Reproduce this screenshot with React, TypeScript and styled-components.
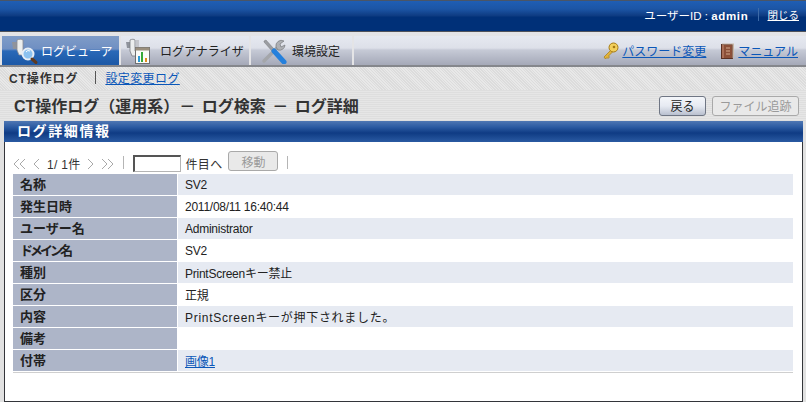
import React, { ReactElement } from 'react';
import styled, { createGlobalStyle } from 'styled-components';

const FONT = `"Liberation Sans", "Noto Sans CJK JP", sans-serif`;
const TAB_BG = 'linear-gradient(#e6e9f0 0, #dde0e9 12px, #c6cad6 14px, #b4b8c6 22px, #a5a9b8 29px)';

const ROWS: { label: string; value: string; link?: boolean; narrow?: boolean; wide?: boolean }[] = [
  { label: '名称', value: 'SV2' },
  { label: '発生日時', value: '2011/08/11 16:40:44' },
  { label: 'ユーザー名', value: 'Administrator' },
  { label: 'ドメイン名', value: 'SV2', narrow: true },
  { label: '種別', value: 'PrintScreenキー禁止' },
  { label: '区分', value: '正規' },
  { label: '内容', value: 'PrintScreenキーが押下されました。', wide: true },
  { label: '備考', value: '' },
  { label: '付帯', value: '画像1', link: true },
];

function ViewerIcon(): ReactElement {
  return (
    <svg width="36" height="28" viewBox="0 0 36 28">
      <path d="M7 5h5v7H8z" fill="#8f939c" />
      <path d="M12 3c2-1 5-1 6 0v11l5 1v3H14l-2-5z" fill="#eceeee" stroke="#8a8c92" strokeWidth="0.8" />
      <circle cx="23" cy="17" r="5.500" fill="#8cc2f0" stroke="#e6edf6" strokeWidth="2" />
      <path d="M21 15a3 3 0 0 1 4-1" stroke="#fff" fill="none" />
      <path d="M27 22l4 3.500" stroke="#5e3a20" strokeWidth="3" strokeLinecap="round" />
    </svg>
  );
}

function AnalyzerIcon(): ReactElement {
  return (
    <svg width="36" height="28" viewBox="0 0 36 28">
      <path d="M2 5h4v6H3z" fill="#8f939c" />
      <path d="M6 3c2-1 4-1 5 0v11l5 1v4H8l-2-5z" fill="#eceeee" stroke="#7a7b80" strokeWidth="0.8" />
      <path d="M12 3h3v8h-3z" fill="#c4c6cb" />
      <rect x="11.500" y="10.500" width="14" height="16" fill="#fbfbf7" stroke="#6f6f70" />
      <rect x="11.500" y="10.500" width="14" height="3" fill="#9a8f7e" />
      <rect x="14" y="19" width="2" height="6" fill="#2d9ad6" />
      <rect x="17" y="15" width="2" height="10" fill="#37a838" />
      <rect x="21" y="21" width="2" height="4" fill="#e28a1c" />
    </svg>
  );
}

function ToolsIcon(): ReactElement {
  return (
    <svg width="26" height="26" viewBox="0 0 26 26">
      <path d="M3 23L17 9" stroke="#a4a6aa" strokeWidth="3.500" strokeLinecap="round" />
      <path d="M15 9a5.500 5.500 0 0 1 8-6l-4 3 1 3 4-2a5.500 5.500 0 0 1-7 5z" fill="#aeb0b4" stroke="#77787c" strokeWidth="0.7" />
      <path d="M3 3l2-1 8 9-2 2-8-9z" fill="#9b9da2" stroke="#77787c" strokeWidth="0.5" />
      <path d="M13 13l10 11" stroke="#2580dc" strokeWidth="5" strokeLinecap="round" />
    </svg>
  );
}

function KeyIcon(): ReactElement {
  return (
    <svg width="17" height="18" viewBox="0 0 17 18">
      <path d="M9 8L2 15l1.500 2 1.500-1.500 1 1 1.500-1.500-1-1 4-4z" fill="#e3b43a" stroke="#a57a14" strokeWidth="0.7" />
      <circle cx="11.500" cy="5.500" r="4.500" fill="#f2cf5c" stroke="#a57a14" />
      <circle cx="12" cy="5" r="1.300" fill="#a57a14" />
    </svg>
  );
}

function BookIcon(): ReactElement {
  return (
    <svg width="14" height="16" viewBox="0 0 14 16">
      <rect x="0.500" y="1.500" width="11" height="14" fill="#8b4f38" stroke="#5a3022" />
      <path d="M1 0.500h12v13l-1.500 2V1.500H1z" fill="#c9b8a8" />
      <path d="M2 2v13" stroke="#c98f74" />
      <path d="M5 5h4M5 8h4M5 11h4" stroke="#d4aa8c" />
    </svg>
  );
}

function App(): ReactElement {
  return (
    <Page>
      <GlobalStyle />
      <Banner>
        <UserId>ユーザーID : <b>admin</b></UserId>
        <BannerSep />
        <CloseLink>閉じる</CloseLink>
      </Banner>
      <TabBar>
        <Tab $active $width={117}>
          <ViewerIcon />
          <TabLabel>ログビューア</TabLabel>
        </Tab>
        <Tab $width={128}>
          <AnalyzerIcon />
          <TabLabel>ログアナライザ</TabLabel>
        </Tab>
        <Tab $width={101} $gap={5} $inset={10}>
          <ToolsIcon />
          <TabLabel>環境設定</TabLabel>
        </Tab>
        <TabTools>
          <ToolLink>
            <KeyIcon />
            <BlueLink>パスワード変更</BlueLink>
          </ToolLink>
          <ToolLink>
            <BookIcon />
            <BlueLink>マニュアル</BlueLink>
          </ToolLink>
        </TabTools>
      </TabBar>
      <SubNav>
        <SubCurrent>CT操作ログ</SubCurrent>
        <SubSep />
        <SubLink>設定変更ログ</SubLink>
      </SubNav>
      <TitleRow>
        <Title>CT操作ログ（運用系）－ ログ検索 － ログ詳細</Title>
        <ActionButton>戻る</ActionButton>
        <ActionButton disabled $width={87}>ファイル追跡</ActionButton>
      </TitleRow>
      <Panel>
        <PanelHead>ログ詳細情報</PanelHead>
        <Pager>
          <PagerArrows>
            <svg width="28" height="12" viewBox="0 0 28 12">
              <path d="M6 1L1 6l5 5M12 1L7 6l5 5M26 1l-5 5 5 5" fill="none" stroke="#a9a9a9" />
            </svg>
          </PagerArrows>
          <PagerCount>1/ 1件</PagerCount>
          <PagerArrows>
            <svg width="27" height="12" viewBox="0 0 27 12">
              <path d="M1 1l5 5-5 5M15 1l5 5-5 5M21 1l5 5-5 5" fill="none" stroke="#a9a9a9" />
            </svg>
          </PagerArrows>
          <PagerSep />
          <PageInput />
          <PagerCount $tight>件目へ</PagerCount>
          <MoveButton disabled>移動</MoveButton>
          <PagerSep />
        </Pager>
        <DetailTable>
          <tbody>
            {ROWS.map((row, i) => (
              <tr key={row.label}>
                <LabelCell $narrow={row.narrow}>{row.label}</LabelCell>
                <ValueCell $odd={i % 2 === 0} $wide={row.wide}>
                  {row.link ? <BlueLink>{row.value}</BlueLink> : row.value}
                </ValueCell>
              </tr>
            ))}
          </tbody>
        </DetailTable>
      </Panel>
    </Page>
  );
}

const GlobalStyle = createGlobalStyle`
  html, body {
    margin: 0;
    padding: 0;
    overflow: hidden;
  }
`;

const Page = styled.div`
  width: 806px;
  height: 402px;
  display: flex;
  flex-direction: column;
  font-family: ${FONT};
  font-size: 12px;
  color: #222;
  background: #e1e1e1;
  overflow: hidden;
`;

const Banner = styled.div`
  height: 32px;
  box-sizing: border-box;
  flex: none;
  display: flex;
  align-items: center;
  justify-content: flex-end;
  padding: 0 7px 3px 0;
  color: #fff;
  border-top: 1px solid #4a5566;
  border-bottom: 1px solid #50535a;
  background: linear-gradient(#1f5eb4 0, #1c55a5 8px, #0d3a80 15px, #003078 16px, #003078 100%);
`;

const UserId = styled.span`
  font-size: 11.5px;
  & b {
    letter-spacing: 0.7px;
  }
`;

const BannerSep = styled.span`
  width: 1px;
  height: 13px;
  margin: 0 9px 0 9px;
  background: #3c6aa8;
`;

const CloseLink = styled.a`
  color: #fff;
  font-size: 10.500px;
  text-decoration: underline;
`;

const TabBar = styled.div`
  height: 35px;
  box-sizing: border-box;
  flex: none;
  display: flex;
  padding: 4px 0 0 2px;
  gap: 2px;
  background: #e4e4e6;
  border-bottom: 2px solid #85878c;
`;

const Tab = styled.div<{ $active?: boolean; $width: number; $gap?: number; $inset?: number }>`
  width: ${p => p.$width}px;
  box-sizing: border-box;
  display: flex;
  align-items: center;
  gap: ${p => p.$gap ?? 0}px;
  padding-left: ${p => p.$inset ?? 3}px;
  color: ${p => (p.$active ? '#fff' : '#222')};
  background: ${p =>
    p.$active
      ? 'linear-gradient(#7f9cc8 0, #6f8fc2 13px, #2a69b8 15px, #1d5aa8 27px)'
      : TAB_BG};
`;

const TabLabel = styled.span`
  font-size: 12px;
  white-space: nowrap;
`;

const TabTools = styled.div`
  flex: 1;
  display: flex;
  justify-content: flex-end;
  align-items: center;
  gap: 15px;
  padding-right: 8px;
  background: ${TAB_BG};
`;

const ToolLink = styled.span`
  display: inline-flex;
  align-items: center;
  gap: 3px;
`;

const BlueLink = styled.a`
  color: #0b57b8;
  text-decoration: underline;
  font-size: 12px;
`;

const SubNav = styled.div`
  height: 23px;
  flex: none;
  box-sizing: border-box;
  display: flex;
  align-items: center;
  padding: 0 0 2px 9px;
  background: repeating-linear-gradient(45deg, #dcdcdc 0, #dcdcdc 1px, #e8e8e8 1px, #e8e8e8 2px);
`;

const SubCurrent = styled.span`
  font-weight: bold;
  font-size: 12px;
  letter-spacing: 0.9px;
  color: #333;
`;

const SubSep = styled.span`
  width: 1px;
  height: 13px;
  margin: 0 9px 0 17px;
  background: #555;
`;

const SubLink = styled(BlueLink)`
  letter-spacing: 0.4px;
`;

const TitleRow = styled.div`
  height: 31px;
  flex: none;
  box-sizing: border-box;
  display: flex;
  align-items: center;
  gap: 6px;
  padding: 0 7px 0 14px;
  background: repeating-linear-gradient(0deg, #dedede 0, #dedede 1px, #e6e6e6 1px, #e6e6e6 2px);
`;

const Title = styled.h1`
  flex: 1;
  margin: 0 0 2px;
  font-size: 16px;
  font-weight: bold;
  word-spacing: 2px;
  color: #333;
  white-space: nowrap;
`;

const ActionButton = styled.button<{ $width?: number }>`
  width: ${p => p.$width ?? 47}px;
  height: 20px;
  box-sizing: border-box;
  padding: 0;
  border-radius: 3px;
  font-family: ${FONT};
  font-size: 12px;
  color: #222;
  border: 1px solid #6f7684;
  background: linear-gradient(#f4f6fa, #e6eaf2 50%, #b9c0cf);
  &:disabled {
    color: #9a9a9a;
    border-color: #a9a9a9;
    background: #e9e9e9;
  }
`;

const Panel = styled.section`
  flex: 1;
  min-height: 0;
  margin: 0 3px 0 4px;
  box-sizing: border-box;
  display: flex;
  flex-direction: column;
  background: #fff;
  border-left: 1px solid #33353a;
  border-right: 1px solid #33353a;
  border-bottom: 1px solid #33353a;
`;

const PanelHead = styled.h2`
  height: 21px;
  flex: none;
  margin: 0 -1px;
  box-sizing: border-box;
  padding: 1px 0 0 13px;
  font-size: 14px;
  font-weight: bold;
  letter-spacing: 1.600px;
  line-height: 18px;
  color: #fff;
  background: linear-gradient(#4f77b3 0, #2c5ba2 6px, #0f3b84 12px, #2a5aa2 21px);
`;

const Pager = styled.div`
  height: 32px;
  flex: none;
  display: flex;
  align-items: center;
  padding: 6px 0 0 8px;
  box-sizing: border-box;
  color: #333;
`;

const PagerArrows = styled.span`
  display: inline-flex;
  align-items: center;
  margin: 6px 0 0 0;
`;

const PagerCount = styled.span<{ $tight?: boolean }>`
  font-size: 12px;
  letter-spacing: 0.300px;
  margin: 5px 6px 0 ${p => (p.$tight ? 5 : 6)}px;
  white-space: nowrap;
`;

const PagerSep = styled.span`
  width: 1px;
  height: 13px;
  margin: 3px 9px 0 9px;
  background: #b5b5b5;
`;

const PageInput = styled.input`
  width: 48px;
  height: 17px;
  box-sizing: border-box;
  padding: 0;
  margin: 5px 0 0 0;
  border: 1px solid #b4b4b4;
  border-top: 2px solid #555;
  border-left: 2px solid #555;
`;

const MoveButton = styled.button`
  width: 50px;
  height: 20px;
  box-sizing: border-box;
  padding: 0;
  border-radius: 3px;
  font-family: ${FONT};
  font-size: 12px;
  color: #9a9a9a;
  border: 1px solid #a9a9a9;
  background: #e9e9e9;
`;

const DetailTable = styled.table`
  width: 780px;
  margin-left: 8px;
  border-collapse: separate;
  border-spacing: 0;
  table-layout: fixed;
  border-bottom: 1px solid #cfcfcf;
`;

const LabelCell = styled.th<{ $narrow?: boolean }>`
  height: 19px;
  box-sizing: content-box;
  padding: 0 0 2px 7px;
  width: 157px;
  text-align: left;
  font-size: 13px;
  font-weight: bold;
  letter-spacing: ${p => (p.$narrow ? '-3px' : '0')};
  color: #222;
  background: #adb5c8;
  border-bottom: 1px solid #fff;
  border-right: 1px solid #fff;
`;

const ValueCell = styled.td<{ $odd: boolean; $wide?: boolean }>`
  height: 21px;
  padding: 0 0 0 7px;
  font-size: 12px;
  letter-spacing: ${p => (p.$wide ? '0.700px' : '-0.250px')};
  color: #222;
  background: ${p => (p.$odd ? '#e6eaf2' : '#fff')};
  border-bottom: 1px solid #fff;
`;

export default App;
